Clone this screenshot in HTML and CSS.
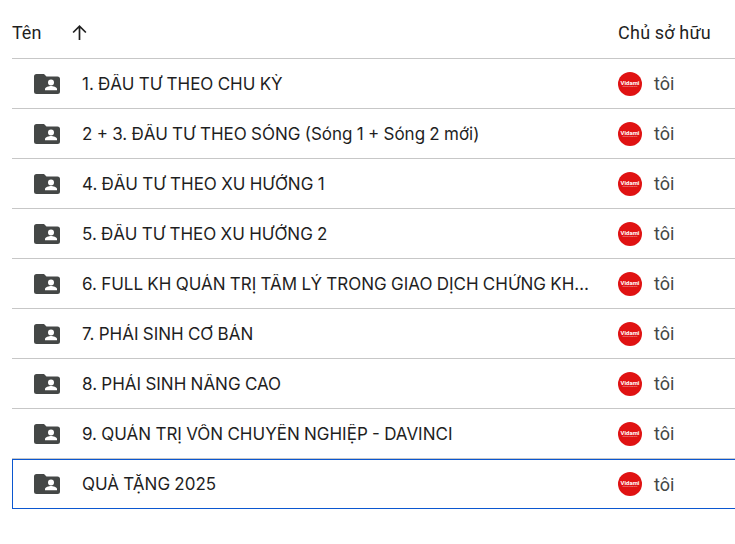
FILE: index.html
```html
<!DOCTYPE html>
<html lang="vi">
<head>
    <meta charset="UTF-8">
    <meta name="viewport" content="width=device-width, initial-scale=1.0">
    <title>Drive</title>
    <link rel="stylesheet" href="styles.css">
</head>
<body>
    <svg class="defs" width="0" height="0" aria-hidden="true">
        <symbol id="folder" viewBox="0 0 26 20">
            <path d="M2.5 0H10l2.5 2.6H23.5A2.5 2.5 0 0 1 26 5.1V17.5A2.5 2.5 0 0 1 23.5 20H2.5A2.5 2.5 0 0 1 0 17.5V2.5A2.5 2.5 0 0 1 2.5 0Z" fill="#444746"/>
            <circle cx="17" cy="8.4" r="3" fill="#fff"/>
            <path d="M11 16.2v-1.1c0-2 4-3 6-3s6 1 6 3v1.1Z" fill="#fff"/>
        </symbol>
    </svg>

    <div class="file-list">
        <div class="list-head">
            <div class="col-name">
                <span>Tên</span>
                <svg class="sort-arrow" viewBox="0 0 16 16" width="17" height="17">
                    <path d="M8 15V2M2 8l6-6 6 6" fill="none" stroke="#1f1f1f" stroke-width="1.6"/>
                </svg>
            </div>
            <div class="col-owner">Chủ sở hữu</div>
        </div>

        <!-- Folder rows -->
        <div class="row">
            <svg class="folder-icon"><use href="#folder"/></svg>
            <div class="row-name">1. ĐÂU TƯ THEO CHU KỲ</div>
            <div class="owner"><div class="avatar"><span class="brand">Vidami</span><span class="tagline">ĐẦU TƯ CHỨNG KHOÁN</span></div><span>tôi</span></div>
        </div>
        <div class="row">
            <svg class="folder-icon"><use href="#folder"/></svg>
            <div class="row-name">2 + 3. ĐÂU TƯ THEO SÓNG (Sóng 1 + Sóng 2 mới)</div>
            <div class="owner"><div class="avatar"><span class="brand">Vidami</span><span class="tagline">ĐẦU TƯ CHỨNG KHOÁN</span></div><span>tôi</span></div>
        </div>
        <div class="row">
            <svg class="folder-icon"><use href="#folder"/></svg>
            <div class="row-name">4. ĐÂU TƯ THEO XU HƯỚNG 1</div>
            <div class="owner"><div class="avatar"><span class="brand">Vidami</span><span class="tagline">ĐẦU TƯ CHỨNG KHOÁN</span></div><span>tôi</span></div>
        </div>
        <div class="row">
            <svg class="folder-icon"><use href="#folder"/></svg>
            <div class="row-name">5. ĐÂU TƯ THEO XU HƯỚNG 2</div>
            <div class="owner"><div class="avatar"><span class="brand">Vidami</span><span class="tagline">ĐẦU TƯ CHỨNG KHOÁN</span></div><span>tôi</span></div>
        </div>
        <div class="row">
            <svg class="folder-icon"><use href="#folder"/></svg>
            <div class="row-name">6. FULL KH QUẢN TRỊ TÂM LÝ TRONG GIAO DỊCH CHỨNG KHOÁN</div>
            <div class="owner"><div class="avatar"><span class="brand">Vidami</span><span class="tagline">ĐẦU TƯ CHỨNG KHOÁN</span></div><span>tôi</span></div>
        </div>
        <div class="row">
            <svg class="folder-icon"><use href="#folder"/></svg>
            <div class="row-name">7. PHÁI SINH CƠ BẢN</div>
            <div class="owner"><div class="avatar"><span class="brand">Vidami</span><span class="tagline">ĐẦU TƯ CHỨNG KHOÁN</span></div><span>tôi</span></div>
        </div>
        <div class="row">
            <svg class="folder-icon"><use href="#folder"/></svg>
            <div class="row-name">8. PHÁI SINH NÂNG CAO</div>
            <div class="owner"><div class="avatar"><span class="brand">Vidami</span><span class="tagline">ĐẦU TƯ CHỨNG KHOÁN</span></div><span>tôi</span></div>
        </div>
        <div class="row">
            <svg class="folder-icon"><use href="#folder"/></svg>
            <div class="row-name">9. QUẢN TRỊ VÔN CHUYÊN NGHIỆP - DAVINCI</div>
            <div class="owner"><div class="avatar"><span class="brand">Vidami</span><span class="tagline">ĐẦU TƯ CHỨNG KHOÁN</span></div><span>tôi</span></div>
        </div>
        <div class="row selected">
            <svg class="folder-icon"><use href="#folder"/></svg>
            <div class="row-name">QUÀ TẶNG 2025</div>
            <div class="owner"><div class="avatar"><span class="brand">Vidami</span><span class="tagline">ĐẦU TƯ CHỨNG KHOÁN</span></div><span>tôi</span></div>
        </div>
    </div>
</body>
</html>
```

FILE: styles.css
```css
html, body {
    margin: 0;
    height: 100%;
    overflow: hidden;
}
body {
    background-color: #fff;
    color: #1f1f1f;
    font-family: Inter, Roboto, sans-serif;
    font-size: 17px;
    word-spacing: -0.5px;
}
.defs {
    display: block;
    height: 0;
}
.file-list {
    padding-left: 12px;
}
.list-head {
    display: flex;
    align-items: center;
    height: 59px;
    padding-top: 7px;
    box-sizing: border-box;
    border-bottom: 1px solid #c7c7c7;
}
.col-name {
    display: flex;
    align-items: center;
    gap: 30px;
    width: 606px;
    font-family: Roboto, sans-serif;
    font-size: 18px;
}
.col-owner {
    white-space: nowrap;
    font-family: Roboto, sans-serif;
    font-size: 18px;
    letter-spacing: 0.3px;
}
.sort-arrow {
    display: block;
}
.row {
    display: flex;
    align-items: center;
    height: 50px;
    box-sizing: border-box;
    border-bottom: 1px solid #c7c7c7;
}
.folder-icon {
    width: 26px;
    height: 20px;
    margin-left: 22px;
    flex: none;
}
.row-name {
    width: 510px;
    margin-left: 22px;
    margin-right: 26px;
    flex: none;
    white-space: nowrap;
    overflow: hidden;
    text-overflow: ellipsis;
    color: #1f1f1f;
}
.owner {
    display: flex;
    align-items: center;
    gap: 12px;
    color: #444746;
    font-family: Roboto, sans-serif;
    font-size: 18px;
}
.avatar {
    width: 24px;
    height: 24px;
    border-radius: 50%;
    background-color: #e01212;
    color: #fff;
    display: flex;
    flex-direction: column;
    align-items: center;
    justify-content: center;
    overflow: hidden;
}
.brand {
    font-size: 6px;
    line-height: 6px;
    font-weight: 700;
}
.tagline {
    font-size: 1.5px;
    line-height: 2px;
    white-space: nowrap;
    opacity: 0.7;
}
.selected {
    border: 1px solid #0b57d0;
    border-right: none;
}
.selected .folder-icon {
    margin-left: 21px;
}
```
